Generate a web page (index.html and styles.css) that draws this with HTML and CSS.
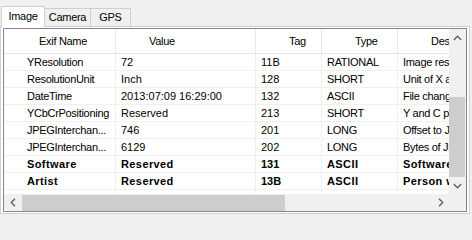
FILE: index.html
```html
<!DOCTYPE html>
<html>
<head>
<meta charset="utf-8">
<link rel="stylesheet" href="styles.css">
</head>
<body>
<div class="window">
  <div class="tabstrip">
    <div class="tab-edge"></div>
    <div class="tab selected t-image">Image</div>
    <div class="tab t-camera">Camera</div>
    <div class="tab t-gps">GPS</div>
    <div class="tab-fill"></div>
  </div>
  <div class="panel">
    <div class="listview">
      <div class="content">
        <div class="header">
          <div class="hcell c-name h-name">Exif Name</div>
          <div class="hcell c-value">Value</div>
          <div class="hcell c-tag">Tag</div>
          <div class="hcell c-type">Type</div>
          <div class="hcell c-desc">Description</div>
        </div>
        <div class="row">
          <div class="cell c-name">YResolution</div>
          <div class="cell c-value">72</div>
          <div class="cell c-tag">11B</div>
          <div class="cell c-type">RATIONAL</div>
          <div class="cell c-desc">Image resolution in height direction</div>
        </div>
        <div class="row">
          <div class="cell c-name">ResolutionUnit</div>
          <div class="cell c-value">Inch</div>
          <div class="cell c-tag">128</div>
          <div class="cell c-type">SHORT</div>
          <div class="cell c-desc">Unit of X and Y resolution</div>
        </div>
        <div class="row">
          <div class="cell c-name">DateTime</div>
          <div class="cell c-value">2013:07:09 16:29:00</div>
          <div class="cell c-tag">132</div>
          <div class="cell c-type">ASCII</div>
          <div class="cell c-desc">File change date and time</div>
        </div>
        <div class="row">
          <div class="cell c-name">YCbCrPositioning</div>
          <div class="cell c-value">Reserved</div>
          <div class="cell c-tag">213</div>
          <div class="cell c-type">SHORT</div>
          <div class="cell c-desc">Y and C positioning</div>
        </div>
        <div class="row">
          <div class="cell c-name">JPEGInterchan...</div>
          <div class="cell c-value">746</div>
          <div class="cell c-tag">201</div>
          <div class="cell c-type">LONG</div>
          <div class="cell c-desc">Offset to JPEG SOI</div>
        </div>
        <div class="row">
          <div class="cell c-name">JPEGInterchan...</div>
          <div class="cell c-value">6129</div>
          <div class="cell c-tag">202</div>
          <div class="cell c-type">LONG</div>
          <div class="cell c-desc">Bytes of JPEG data</div>
        </div>
        <div class="row bold">
          <div class="cell c-name">Software</div>
          <div class="cell c-value">Reserved</div>
          <div class="cell c-tag">131</div>
          <div class="cell c-type">ASCII</div>
          <div class="cell c-desc">Software used</div>
        </div>
        <div class="row bold">
          <div class="cell c-name">Artist</div>
          <div class="cell c-value">Reserved</div>
          <div class="cell c-tag">13B</div>
          <div class="cell c-type">ASCII</div>
          <div class="cell c-desc">Person who created the image</div>
        </div>
        <div class="row">
          <div class="cell c-name"></div>
          <div class="cell c-value"></div>
          <div class="cell c-tag"></div>
          <div class="cell c-type"></div>
          <div class="cell c-desc"></div>
        </div>
      </div>
      <div class="vscroll">
        <div class="sbtn"><svg width="9" height="6" viewBox="0 0 9 6"><polyline points="0.8,5 4.5,1.3 8.2,5" fill="none" stroke="#606060" stroke-width="1.4"/></svg></div>
        <div class="vtrack-top"></div>
        <div class="vthumb"></div>
        <div class="sbtn"><svg width="9" height="6" viewBox="0 0 9 6"><polyline points="0.8,1 4.5,4.7 8.2,1" fill="none" stroke="#606060" stroke-width="1.4"/></svg></div>
      </div>
      <div class="hscroll">
        <div class="sbtn"><svg width="6" height="9" viewBox="0 0 6 9"><polyline points="5,0.8 1.3,4.5 5,8.2" fill="none" stroke="#606060" stroke-width="1.4"/></svg></div>
        <div class="hthumb"></div>
        <div class="htrack"></div>
        <div class="sbtn"><svg width="6" height="9" viewBox="0 0 6 9"><polyline points="1,0.8 4.7,4.5 1,8.2" fill="none" stroke="#606060" stroke-width="1.4"/></svg></div>
      </div>
      <div class="corner"></div>
    </div>
  </div>
</div>
</body>
</html>
```
FILE: styles.css
```css
body {
  margin: 0;
  background: #f0f0f0;
  font-family: "Liberation Sans", Arial, sans-serif;
  font-size: 11px;
  color: #000;
}

.window {
  width: 470px;
}

.tabstrip {
  display: flex;
  align-items: flex-end;
  height: 27px;
}

.tab-edge {
  width: 1px;
  height: 0;
  border-bottom: 1px solid #cfcfcf;
}

.tab {
  box-sizing: border-box;
  height: 19px;
  border: 1px solid #cfcfcf;
  border-left: none;
  background: #f0f0f0;
  text-align: center;
  line-height: 17px;
  letter-spacing: -0.3px;
  white-space: nowrap;
}

.tab.selected {
  height: 21px;
  border-left: 1px solid #cfcfcf;
  border-bottom: none;
  background: #fff;
  line-height: 19px;
}

.t-image { width: 44px; }
.t-camera { width: 46px; }
.t-gps { width: 40px; }

.tab-fill {
  flex: 1;
  height: 0;
  border-bottom: 1px solid #cfcfcf;
}

.panel {
  box-sizing: border-box;
  height: 187px;
  border: 1px solid #cfcfcf;
  border-top: none;
  background: #fff;
  padding: 1px 2px;
}

.listview {
  box-sizing: border-box;
  height: 184px;
  border: 1px solid #828790;
  background: #fff;
  display: grid;
  grid-template-columns: 1fr 17px;
  grid-template-rows: 1fr 17px;
}

.content {
  overflow: hidden;
}

.header {
  display: flex;
  box-sizing: border-box;
  height: 25px;
  border-bottom: 1px solid #e5e5e5;
}

.hcell {
  flex: none;
  box-sizing: border-box;
  border-right: 1px solid #e3e9f3;
  line-height: 24px;
  padding-left: 33px;
  letter-spacing: -0.3px;
  white-space: nowrap;
  overflow: hidden;
}

.hcell.h-name {
  padding-left: 35px;
}

.row {
  display: flex;
  box-sizing: border-box;
  height: 17px;
  border-bottom: 1px solid #f0f0f0;
}

.cell {
  flex: none;
  box-sizing: border-box;
  border-right: 1px solid #f0f0f0;
  line-height: 16px;
  padding-left: 5px;
  letter-spacing: -0.3px;
  white-space: nowrap;
  overflow: hidden;
}

.cell.c-value,
.cell.c-tag {
  letter-spacing: 0;
}

.row.bold {
  font-weight: bold;
}

.row.bold .cell {
  letter-spacing: 0.4px;
}

.row.bold .cell.c-tag {
  letter-spacing: 0;
}

.cell.c-name {
  padding-left: 23px;
}

.c-name { width: 112px; }
.c-value { width: 140px; }
.c-tag { width: 66px; }
.c-type { width: 76px; }
.c-desc { width: 220px; }

.vscroll {
  background: #f0f0f0;
  display: flex;
  flex-direction: column;
}

.sbtn {
  flex: none;
  width: 17px;
  height: 17px;
  display: flex;
  align-items: center;
  justify-content: center;
}

.vtrack-top {
  height: 51px;
}

.vthumb {
  height: 80px;
  margin: 0 1px 0 0;
  background: #cdcdcd;
}

.hscroll {
  background: #f0f0f0;
  display: flex;
}

.hthumb {
  width: 263px;
  margin: 1px 0 0 1px;
  background: #cdcdcd;
}

.htrack {
  flex: 1;
}

.corner {
  background: #f0f0f0;
}
```
